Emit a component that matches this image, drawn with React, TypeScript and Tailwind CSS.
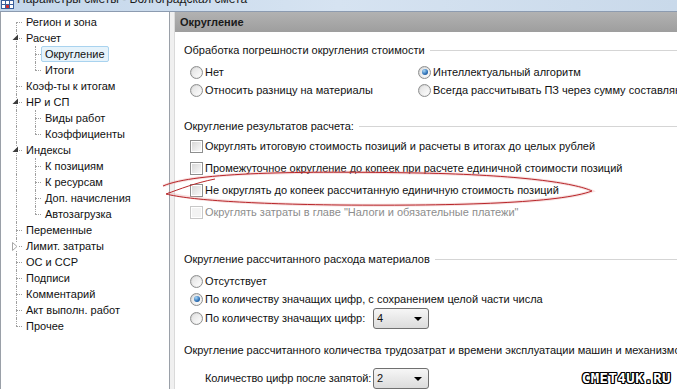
import React from 'react';

type Node = { label: string; open?: boolean; closed?: boolean; children?: string[] };

const tree: Node[] = [
  { label: 'Регион и зона' },
  { label: 'Расчет', open: true, children: ['Округление', 'Итоги'] },
  { label: 'Коэф-ты к итогам' },
  { label: 'НР и СП', open: true, children: ['Виды работ', 'Коэффициенты'] },
  { label: 'Индексы', open: true, children: ['К позициям', 'К ресурсам', 'Доп. начисления', 'Автозагрузка'] },
  { label: 'Переменные' },
  { label: 'Лимит. затраты', closed: true },
  { label: 'ОС и ССР' },
  { label: 'Подписи' },
  { label: 'Комментарий' },
  { label: 'Акт выполн. работ' },
  { label: 'Прочее' },
];

type Row = {
  label: string;
  depth: number;
  top: boolean;
  bottom: boolean;
  rootContinues: boolean;
  glyph?: 'open' | 'closed';
  selected?: boolean;
};

function flatten(): Row[] {
  const rows: Row[] = [];
  tree.forEach((n, i) => {
    const last = i === tree.length - 1;
    rows.push({
      label: n.label,
      depth: 0,
      top: i > 0,
      bottom: !last,
      rootContinues: !last,
      glyph: n.open ? 'open' : n.closed ? 'closed' : undefined,
    });
    (n.children || []).forEach((c, j) => {
      rows.push({
        label: c,
        depth: 1,
        top: true,
        bottom: j < n.children!.length - 1,
        rootContinues: !last,
        selected: c === 'Округление',
      });
    });
  });
  return rows;
}

function Connector({ top, bottom, glyph }: { top: boolean; bottom: boolean; glyph?: 'open' | 'closed' }) {
  return (
    <div className="relative h-full w-[19px] shrink-0">
      <div className={`ml-[13px] h-[8px] ${top ? 'border-l border-dotted border-[#a0a0a0]' : ''}`} />
      <div
        className={`ml-[13px] h-[8px] w-[6px] border-t border-dotted border-[#a0a0a0] ${bottom ? 'border-l' : ''}`}
      />
      {glyph === 'open' && (
        <svg className="absolute left-[9px] top-[4px] bg-white" width="7" height="7" viewBox="0 0 7 7">
          <path d="M6 0.5 L6 6 L0.5 6 Z" fill="#3c3c3c" />
        </svg>
      )}
      {glyph === 'closed' && (
        <svg className="absolute left-[9px] top-[4px] bg-white" width="6" height="9" viewBox="0 0 6 9">
          <path d="M0.5 0.5 L5 4.5 L0.5 8.5 Z" fill="white" stroke="#a6a6a6" strokeWidth="1" />
        </svg>
      )}
    </div>
  );
}

function TreeRow({ row }: { row: Row }) {
  return (
    <div className="flex h-[16px] items-stretch">
      {row.depth === 1 && (
        <div className="h-full w-[19px] shrink-0">
          {row.rootContinues && <div className="ml-[13px] h-full border-l border-dotted border-[#a0a0a0]" />}
        </div>
      )}
      <Connector top={row.top} bottom={row.bottom} glyph={row.glyph} />
      <div
        className={`flex items-center whitespace-nowrap rounded-[2px] border px-[3px] ${
          row.selected ? 'border-[#a9d3ef] bg-[#e6f3fb]' : 'border-transparent'
        }`}
      >
        {row.label}
      </div>
    </div>
  );
}

function Radio({ checked }: { checked?: boolean }) {
  return (
    <span className="flex h-[13px] w-[13px] shrink-0 items-center justify-center rounded-full border border-[#8e8f8f] bg-linear-to-br from-[#cfcfcf] to-[#fafafa]">
      <span className="flex h-[9px] w-[9px] items-center justify-center rounded-full bg-linear-to-br from-[#e2e2e2] to-[#fdfdfd]">
        {checked && (
          <span className="h-[6px] w-[6px] rounded-full bg-[radial-gradient(circle_at_35%_30%,#a8d8f8,#2c6fb5_60%,#1b4d86)]" />
        )}
      </span>
    </span>
  );
}

function Check({ disabled }: { disabled?: boolean }) {
  return (
    <span
      className={`flex h-[13px] w-[13px] shrink-0 border bg-white p-[1px] ${
        disabled ? 'border-[#c8c8c8]' : 'border-[#8e8f8f]'
      }`}
    >
      <span
        className={`h-full w-full ${
          disabled ? 'bg-[#f3f3f3]' : 'bg-linear-to-br from-[#d8d8d8] to-[#f9f9f9]'
        }`}
      />
    </span>
  );
}

function RadioRow({ label, checked }: { label: string; checked?: boolean }) {
  return (
    <div className="flex h-[18px] items-center gap-[2px] whitespace-nowrap">
      <Radio checked={checked} />
      <span>{label}</span>
    </div>
  );
}

function CheckRow({ label, disabled }: { label: string; disabled?: boolean }) {
  return (
    <div className={`ml-[6px] flex h-[22px] items-center gap-[2px] whitespace-nowrap ${disabled ? 'text-[#8d8d8d]' : ''}`}>
      <Check disabled={disabled} />
      <span>{label}</span>
    </div>
  );
}

function GroupTitle({ text, className = '' }: { text: string; className?: string }) {
  return (
    <div className={`flex h-[16px] items-center ${className}`}>
      <span className="shrink-0 whitespace-nowrap">{text}</span>
      <span className="ml-[5px] h-px flex-1 bg-[#d5d5d5]" />
    </div>
  );
}

function Combo({ value }: { value: string }) {
  return (
    <div className="flex h-[21px] w-[56px] shrink-0 items-center justify-between rounded-[3px] border border-[#707070] bg-linear-to-b from-[#f6f6f6] to-[#dcdcdc] pl-[3px] pr-[6px]">
      <span>{value}</span>
      <svg width="8" height="4" viewBox="0 0 8 4">
        <path d="M0 0 L8 0 L4 4 Z" fill="#000" />
      </svg>
    </div>
  );
}

export default function App() {
  const rows = flatten();
  return (
    <div className="relative h-[389px] w-[677px] overflow-hidden bg-[#f0f0f0] font-['Liberation_Sans',Arial,sans-serif] text-[11px] leading-none text-[#111]">
      {/* title bar */}
      <div className="flex h-[12px] overflow-hidden border-b border-[#8c9bb0] bg-linear-to-r from-[#c3d6ea] via-[#d6e3f1] to-[#c9d9ea]">
        <svg className="mt-[-4px] ml-[1px] shrink-0" width="13" height="13" viewBox="0 0 13 13">
          <rect x="0.5" y="0.5" width="12" height="12" fill="#fff" stroke="#3a5f9a" />
          <path d="M0.5 4.5 H12.5 M0.5 8.5 H12.5 M4.5 0.5 V12.5 M8.5 0.5 V12.5" stroke="#3a5f9a" />
          <rect x="5" y="9" width="3" height="3" fill="#d03030" />
        </svg>
        <span className="ml-[3px] mt-[-7px] whitespace-nowrap text-[12px] leading-[13px] text-[#1b1b1b]">
          Параметры сметы - Волгоградская смета
        </span>
      </div>

      <div className="flex h-[377px]">
        {/* tree */}
        <div className="h-full w-[170px] shrink-0 border border-b-0 border-t-0 border-[#9aa0a8] bg-white pl-[2px] pt-[2px]">
          {rows.map((r) => (
            <TreeRow key={r.label} row={r} />
          ))}
        </div>

        {/* settings panel */}
        <div className="ml-[4px] flex min-w-0 flex-1 flex-col border-l border-[#dadada] bg-white">
          <div className="flex h-[20px] shrink-0 items-center bg-linear-to-b from-[#b2b2b2] to-[#9e9e9e] pl-[5px] font-bold text-[#1a1a1a]">
            Округление
          </div>
          <div className="pl-[9px]">
            <GroupTitle className="mt-[10px]" text="Обработка погрешности округления стоимости" />
            <div className="mt-[5px] flex">
              <div className="ml-[6px] w-[228px] shrink-0">
                <RadioRow label="Нет" />
                <RadioRow label="Относить разницу на материалы" />
              </div>
              <div>
                <RadioRow label="Интеллектуальный алгоритм" checked />
                <RadioRow label="Всегда рассчитывать ПЗ через сумму составляющих" />
              </div>
            </div>

            <GroupTitle className="mt-[19px]" text="Округление результатов расчета:" />
            <div className="mt-[1px]">
              <CheckRow label="Округлять итоговую стоимость позиций и расчеты в итогах до целых рублей" />
              <CheckRow label="Промежуточное округление до копеек при расчете единичной стоимости позиций" />
              <CheckRow label="Не округлять до копеек рассчитанную единичную стоимость позиций" />
              <CheckRow label={'Округлять затраты в главе "Налоги и обязательные платежи"'} disabled />
            </div>

            <GroupTitle className="mt-[28px]" text="Округление рассчитанного расхода материалов" />
            <div className="ml-[6px] mt-[5px]">
              <RadioRow label="Отсутствует" />
              <RadioRow label="По количеству значащих цифр, с сохранением целой части числа" checked />
              <div className="flex h-[21px] items-center">
                <div className="flex w-[183px] shrink-0 items-center gap-[2px] whitespace-nowrap">
                  <Radio />
                  <span>По количеству значащих цифр:</span>
                </div>
                <Combo value="4" />
              </div>
            </div>

            <GroupTitle
              className="mt-[13px]"
              text="Округление рассчитанного количества трудозатрат и времени эксплуатации машин и механизмов"
            />
            <div className="mt-[10px] flex h-[21px] items-center">
              <span className="w-[186px] shrink-0 whitespace-nowrap pl-[21px] tracking-[-0.1px]">
                Количество цифр после запятой:
              </span>
              <span className="w-[3px] shrink-0" />
              <Combo value="2" />
            </div>
          </div>
        </div>
      </div>

      {/* hand-drawn red highlight */}
      <svg className="pointer-events-none absolute left-0 top-0" width="677" height="389" viewBox="0 0 677 389">
        <g fill="none" stroke="#e8a0a0" strokeWidth="3" opacity="0.35">
          <path d="M163 186 C 195 172, 300 171, 420 173 C 520 175, 575 183, 592 191 C 560 203, 460 206, 340 205 C 250 204, 190 200, 168 193" />
        </g>
        <g fill="none" stroke="#b8262a" strokeWidth="1">
          <path d="M163 186 C 195 172, 300 171, 420 173 C 520 175, 575 183, 592 191 C 560 203, 460 206, 340 205 C 250 204, 190 200, 166 194 C 180 189, 195 183, 215 179" />
        </g>
      </svg>

      {/* watermark */}
      <div className="absolute bottom-[4px] right-[6px] font-['DejaVu_Sans_Mono',monospace] text-[14px] font-bold tracking-[0.5px] text-white [text-shadow:1px_0_0_#000,-1px_0_0_#000,0_1px_0_#000,0_-1px_0_#000,1px_1px_0_#000,-1px_-1px_0_#000,1px_-1px_0_#000,-1px_1px_0_#000]">
        CMET4UK.RU
      </div>
    </div>
  );
}
